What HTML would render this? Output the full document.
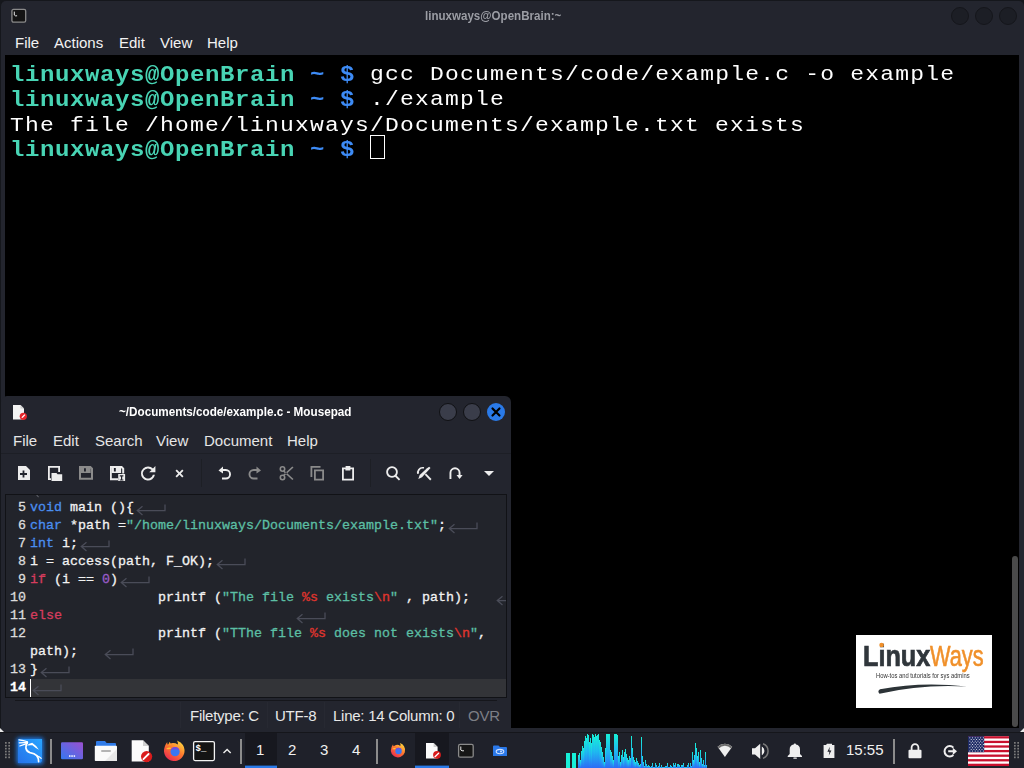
<!DOCTYPE html>
<html><head><meta charset="utf-8">
<style>
*{box-sizing:border-box;margin:0;padding:0}
html,body{width:1024px;height:768px;overflow:hidden;background:#15171c;font-family:"Liberation Sans",sans-serif}
.abs{position:absolute}
#term{left:1px;top:1px;width:1023px;height:731px;background:#23252e;border-radius:5px 5px 0 0}
#termtitle{left:425px;top:8px;transform:scaleX(0.89);transform-origin:0 0;font:bold 13px "Liberation Sans",sans-serif;color:#9b9da4}
.tbtn{width:18px;height:18px;border-radius:50%;background:#1c1e25;border:1px solid #15161b;top:7px}
.menu{font-size:15px;color:#f2f2f2;top:34px}
#tblack{left:5px;top:55px;width:1014px;height:673px;background:#000}
#ttext{left:10px;top:63px;font:bold 24px "Liberation Mono",monospace;letter-spacing:0.6px;line-height:27.78px;transform:scaleY(0.9);transform-origin:0 0;white-space:pre;color:#fff}
.g{color:#48d4b4;font-weight:bold}.b{color:#3d8bf5;font-weight:bold}.tl{height:27.78px}.n{line-height:0;font-weight:normal;font-size:23px;letter-spacing:1.2px;position:relative;top:-1px}
#cursor{left:370px;top:135px;width:15px;height:24px;border:1px solid #fff}
#sb{left:1012px;top:556px;width:6px;height:171px;background:#4a4a4a;border-radius:3px}
#mp{left:1px;top:396px;width:510px;height:336px;background:#23252e;border-radius:6px 6px 0 0}
#mptitle{left:119px;top:404px;font:bold 13px "Liberation Sans",sans-serif;color:#fff;transform:scaleX(0.9);transform-origin:0 0}
.mpm{font-size:15px;color:#e6e6e6;top:432px}
#editor{left:5px;top:494px;width:502px;height:204px;background:#22242b;border:1px solid #111216}
#code{left:0;top:497px;font:13.33px "Liberation Mono",monospace;line-height:18px;white-space:pre;color:#f0f0f0}
#taskbar{left:0;top:732px;width:1024px;height:36px;background:#1f212a;border-top:1px solid #121318}
.tb{color:#f0f0f0;font-size:15px;top:741px}
.k{color:#4a8ef0}.c{color:#d63c5e}.s{color:#5cbfa4}.e{color:#e0352e}.p{color:#9a5cc8}
i.r{display:inline-block;width:28px;height:10px;vertical-align:middle}
.sb{font-size:15px;color:#e8e8e8;top:707px;letter-spacing:-0.25px}
</style></head><body>
<div id="term" class="abs"></div>
<svg class="abs" style="left:10px;top:8px" width="18" height="16" viewBox="0 0 18 16"><rect x="1.9" y="1.4" width="13.8" height="12.8" rx="1.6" fill="#141414" stroke="#8a8a8a" stroke-width="1.3"/><path d="M4.3 3.6v3.4l1 0.8h1.8" stroke="#fff" stroke-width="0.9" fill="none"/></svg>
<div id="termtitle" class="abs">linuxways@OpenBrain:~</div>
<div class="abs tbtn" style="left:951px"></div>
<div class="abs tbtn" style="left:975px"></div>
<div class="abs tbtn" style="left:999px"></div>
<div class="abs menu" style="left:15px">File</div>
<div class="abs menu" style="left:54px">Actions</div>
<div class="abs menu" style="left:119px">Edit</div>
<div class="abs menu" style="left:160px">View</div>
<div class="abs menu" style="left:207px">Help</div>
<div id="tblack" class="abs"></div>
<div id="ttext" class="abs"><div class="tl"><span class="g">linuxways@OpenBrain</span> <span class="b">~ $</span> <span class="n">gcc Documents/code/example.c -o example</span></div><div class="tl"><span class="g">linuxways@OpenBrain</span> <span class="b">~ $</span> <span class="n">./example</span></div><div class="tl"><span class="n">The file /home/linuxways/Documents/example.txt exists</span></div><div class="tl"><span class="g">linuxways@OpenBrain</span> <span class="b">~ $</span> </div></div>
<div id="cursor" class="abs"></div>
<div id="sb" class="abs"></div>
<div class="abs" style="left:856px;top:635px;width:136px;height:73px;background:#fff"></div>
<div id="lw1" class="abs" style="left:863px;top:639px;font:bold 29px 'Liberation Sans',sans-serif;color:#30363b;-webkit-text-stroke:0.7px #30363b;transform:scaleX(0.87);transform-origin:0 0;line-height:34px">Linux</div>
<div id="lw2" class="abs" style="left:930px;top:639px;font:29px 'Liberation Sans',sans-serif;color:#f0902a;-webkit-text-stroke:0.6px #f0902a;transform:scaleX(0.75);transform-origin:0 0;line-height:34px">Ways</div>
<div id="lw3" class="abs" style="left:876px;top:671px;font:7px 'Liberation Sans',sans-serif;color:#333;transform:scaleX(0.83);transform-origin:0 0;line-height:9px;white-space:nowrap">How-tos and tutorials for sys admins</div>
<svg class="abs" style="left:856px;top:635px" width="136" height="73" viewBox="856 635 136 73"><circle cx="881.6" cy="645" r="2.3" fill="#f0902a"/><path d="M879.5 693.8Q922 684 967 686.6Q922 681.2 880 689.2Q877 691 879.5 693.8z" fill="#2c3337"/></svg>


<div id="mp" class="abs"></div>
<div id="mptitle" class="abs">~/Documents/code/example.c - Mousepad</div>
<div class="abs mpm" style="left:13px">File</div>
<div class="abs mpm" style="left:53px">Edit</div>
<div class="abs mpm" style="left:95px">Search</div>
<div class="abs mpm" style="left:156px">View</div>
<div class="abs mpm" style="left:204px">Document</div>
<div class="abs mpm" style="left:287px">Help</div>
<div class="abs" style="left:1px;top:453px;width:510px;height:1px;background:#1d1f26"></div>
<svg class="abs" style="left:0;top:456px" width="512" height="36" viewBox="0 456 512 36">
<g fill="#ededed">
<!-- new -->
<path d="M18 466h8l4 4v10h-12z"/>
<path d="M22.6 470.5h1.8v2.6h2.6v1.8h-2.6v2.6h-1.8v-2.6h-2.6v-1.8h2.6z" fill="#23252e"/>
<!-- open -->
<path d="M48 466h12v6h-1.8v-4.2h-8.4v10.4h1.2v1.8h-3z"/>
<path d="M51.5 473h5l1 1.2h4.7v6.8h-10.7z"/>
<!-- save as -->
<path fill-rule="evenodd" d="M110 466h12l2.2 2.2v5.2h-2v-4.3l-1.1-1.1v5.1h-9.2v-5.1h-0.1v10.2h6.2v2h-8z M113.9 468h1.9v3.6h-1.9z"/>
<path d="M118.2 474h6.9v7h-6.9z"/>
<path d="M119.8 475.3h3.6v1.2h-1.2v2.9h1.2v1.2h-3.6v-1.2h1.2v-2.9h-1.2z" fill="#23252e"/>
<!-- reload -->
<path d="M148 466.6a7 7 0 1 0 6.9 8.2h-2a5.1 5.1 0 1 1 -1.3-4.9l-2.4 2.4h6.2v-6.2l-2.4 2.4a7 7 0 0 0 -5-1.9z"/>
<!-- close x -->
<path d="M175.5 469.3l1.3-1.3l2.7 2.7l2.7-2.7l1.3 1.3l-2.7 2.7l2.7 2.7l-1.3 1.3l-2.7-2.7l-2.7 2.7l-1.3-1.3l2.7-2.7z" transform="translate(0,1.5)"/>
<!-- undo -->
<path d="M218.5 470.5l4.5-4v2.6h2.8a5.2 5.2 0 0 1 0 10.4h-3.8v-1.9h3.8a3.3 3.3 0 0 0 0-6.6h-2.8v2.6z"/>
<!-- paste -->
<path d="M345.6 466h4.8v1.5h3.6v13h-12v-13h3.6z M343.8 469.3v9.4h8.4v-9.4h-1.8v1.3h-5v-1.3z"/>
<!-- search -->
<path d="M392 466.2a5.8 5.8 0 1 1 -0.01 0z M392 468a4 4 0 1 0 0.01 0z"/>
<path d="M395.6 474.6l4.6 4.6l-1.3 1.3l-4.6-4.6z"/>
<!-- replace -->
<path d="M422.5 467a5.5 5.5 0 0 0 -5.3 7l1.8-0.6a3.7 3.7 0 0 1 4.6-4.6l0.6-1.7a5.5 5.5 0 0 0 -1.7-0.1z"/>
<path d="M427 468.3l2.2-1.6l1.3 1.3l-8.5 9.3l-3.7 1.6l1.4-3.8z"/>
<path d="M424.8 474.8l1.3-1.3l5.4 5.6l-1.3 1.3z"/>
<!-- goto -->
<path d="M449.5 479v-6.2a5.5 5.5 0 0 1 11 0v2.2h2.1l-3.05 4l-3.05-4h2.1v-2.2a3.6 3.6 0 0 0 -7.2 0v6.2z"/>
<!-- dropdown -->
<path d="M484 471h10l-5 5z"/>
</g>
<g fill="#8b8b8b">
<!-- save gray -->
<path fill-rule="evenodd" d="M79 466h11.8l2.2 2.2v11.6h-14z M81 468v9.8h10v-8.9l-0.3-0.3v4.3h-9.7v-4.9z M84 468.2h1.9v3.4h-1.9z"/>
<!-- redo -->
<path d="M261 470.5l-4.5-4v2.6h-2.8a5.2 5.2 0 0 0 0 10.4h3.8v-1.9h-3.8a3.3 3.3 0 0 1 0-6.6h2.8v2.6z"/>
<!-- scissors -->
<circle cx="282.5" cy="469" r="2.2" fill="none" stroke="#8b8b8b" stroke-width="1.6"/>
<circle cx="282.5" cy="477.5" r="2.2" fill="none" stroke="#8b8b8b" stroke-width="1.6"/>
<path d="M284.2 470.4l9.3 8.5l-1.2 1.2l-9.3-8.5z M284.2 476.1l9.3-8.5l-1.2-1.2l-9.3 8.5z"/>
<!-- copy -->
<path d="M310.5 466h10v1.8h-8.2v9.2h-1.8z M314 469.5h10v11h-10z M315.8 471.3v7.4h6.4v-7.4z"/>
</g>
<rect x="201" y="459" width="1" height="28" fill="#1d1f25"/>
<rect x="370" y="459" width="1" height="28" fill="#1d1f25"/>
</svg>
<!-- mousepad title icon -->
<svg class="abs" style="left:12px;top:404px" width="16" height="17" viewBox="0 0 16 17">
<path d="M1 1h7.5l3.5 3.5v11h-11z" fill="#f4f4f4"/>
<path d="M8.5 1v3.5h3.5z" fill="#cfcfcf"/>
<circle cx="11.3" cy="12.3" r="3.6" fill="#e5262b"/>
<path d="M9.6 14l0.3-1.2l2.6-2.6l0.9 0.9l-2.6 2.6z" fill="#fff"/>
</svg>
<div class="abs" style="left:439px;top:403px;width:18px;height:18px;border-radius:50%;background:#3a3d4a;border:1px solid #101114"></div>
<div class="abs" style="left:463px;top:403px;width:18px;height:18px;border-radius:50%;background:#3a3d4a;border:1px solid #101114"></div>
<div class="abs" style="left:487px;top:403px;width:18px;height:18px;border-radius:50%;background:#2a7ae8"></div>
<svg class="abs" style="left:487px;top:403px" width="18" height="18" viewBox="0 0 18 18"><path d="M5.5 5.5l7 7M12.5 5.5l-7 7" stroke="#000" stroke-width="2.2" stroke-linecap="round"/></svg>
<!-- status bar -->
<div class="abs" style="left:15px;top:700px;width:482px;height:1px;background:#15161b"></div>
<div class="abs" style="left:180px;top:702px;width:1px;height:26px;background:#272932"></div>
<div class="abs" style="left:267px;top:702px;width:1px;height:26px;background:#272932"></div>
<div class="abs" style="left:324px;top:702px;width:1px;height:26px;background:#272932"></div>
<div class="abs" style="left:459px;top:702px;width:1px;height:26px;background:#272932"></div>
<div class="abs sb" style="left:190px">Filetype: C</div>
<div class="abs sb" style="left:275px">UTF-8</div>
<div class="abs sb" style="left:333px">Line: 14 Column: 0</div>
<div class="abs sb" style="left:468px;color:#7d7f86">OVR</div>
<div id="editor" class="abs"></div>
<div id="gutter" class="abs" style="left:6px;top:499px;width:20px;font:13.33px 'Liberation Mono',monospace;line-height:18px;text-align:right;color:#dcdcdc;-webkit-text-stroke:0.3px currentColor;white-space:pre">5
6
7
8
9
10
11
12

13
<b style="color:#fff">14</b></div>
<div id="hl" class="abs" style="left:30px;top:679px;width:476px;height:18px;background:#333438"></div>
<div id="caret" class="abs" style="left:30px;top:679px;width:1px;height:18px;background:#fff"></div>
<div id="code" class="abs" style="left:30px;top:499px;font:13.33px 'Liberation Mono',monospace;line-height:18px;white-space:pre;color:#f2f2f2;-webkit-text-stroke:0.3px currentColor"><span class="k">void</span> main (){
<span class="k">char</span> *path =<span class="s">"/home/linuxways/Documents/example.txt"</span>;
<span class="k">int</span> i;
i = access(path, F_OK);
<span class="c">if</span> (i == <span class="p">0</span>)
                printf (<span class="s">"The file <span class="e">%s</span> exists<span class="e">\n</span>"</span> , path);
<span class="c">else</span>
                printf (<span class="s">"TThe file <span class="e">%s</span> does not exists<span class="e">\n</span>"</span>,
path);
}
</div>

<svg class="abs" style="left:0;top:0;pointer-events:none" width="507" height="768" viewBox="0 0 507 768"><defs><clipPath id="edclip"><rect x="6" y="495" width="500" height="202"/></clipPath></defs><g clip-path="url(#edclip)" fill="none" stroke="#4a4c58" stroke-width="1.3"><path d="M36.5 495.2L38.6 496.8" stroke="#7a7c84" stroke-width="1"/><path d="M142.5 506.20000000000005L137.3 510.6L142.5 515.0M137.5 510.6H165V504.6"/><path d="M454.5 524.2L449.3 528.6L454.5 533.0M449.5 528.6H477V522.6"/><path d="M86.5 542.2L81.3 546.6L86.5 551.0M81.5 546.6H109V540.6"/><path d="M222.5 560.2L217.3 564.6L222.5 569.0M217.5 564.6H245V558.6"/><path d="M126.5 578.2L121.3 582.6L126.5 587.0M121.5 582.6H149V576.6"/><path d="M502.5 596.2L497.3 600.6L502.5 605.0M497.5 600.6H525V594.6"/><path d="M302.5 614.2L297.3 618.6L302.5 623.0M297.5 618.6H325V612.6"/><path d="M110.5 650.2L105.3 654.6L110.5 659.0M105.5 654.6H133V648.6"/><path d="M46.5 668.2L41.3 672.6L46.5 677.0M41.5 672.6H69V666.6"/><path d="M38.5 686.2L33.3 690.6L38.5 695.0M33.5 690.6H61V684.6"/></g></svg>
<div id="taskbar" class="abs"></div>
<svg class="abs" style="left:0;top:726px" width="8" height="8" viewBox="0 0 8 8"><path d="M0 2L5 7H0z" fill="#e8e8e8"/></svg>
<svg class="abs" style="left:1018px;top:726px" width="6" height="8" viewBox="0 0 6 8"><path d="M6 2V7H1z" fill="#e8e8e8"/></svg>

<svg class="abs" style="left:0;top:732px" width="1024" height="36" viewBox="0 732 1024 36">
<defs>
<linearGradient id="kali" x1="0" y1="1" x2="1" y2="0"><stop offset="0" stop-color="#2672ea"/><stop offset="1" stop-color="#28a4ff"/></linearGradient>
<linearGradient id="purp" x1="0" y1="1" x2="1" y2="0"><stop offset="0" stop-color="#3478f0"/><stop offset="1" stop-color="#9c4fd0"/></linearGradient>
<linearGradient id="viz" x1="0" y1="0" x2="0" y2="1"><stop offset="0" stop-color="#17f0d8"/><stop offset="0.5" stop-color="#1fb8f0"/><stop offset="1" stop-color="#2d6cf6"/></linearGradient>
<radialGradient id="ff" cx="0.35" cy="0.3" r="0.8"><stop offset="0" stop-color="#ffd43a"/><stop offset="0.5" stop-color="#ff7a2a"/><stop offset="1" stop-color="#e8254a"/></radialGradient>
<linearGradient id="ff2" x1="0.85" y1="0.1" x2="0.25" y2="0.95"><stop offset="0" stop-color="#ffd23e"/><stop offset="0.45" stop-color="#ff7b2e"/><stop offset="1" stop-color="#ec2e4e"/></linearGradient>
<filter id="glow" x="-50%" y="-50%" width="200%" height="200%"><feGaussianBlur stdDeviation="2.2"/></filter>
</defs>
<rect x="0" y="732" width="1024" height="1" fill="#15161b"/>
<!-- grip -->
<g fill="#7c7c7c">
<rect x="5.0" y="742.0" width="1.7" height="1.7"/><rect x="1014.0" y="742.0" width="1.7" height="1.7"/><rect x="5.0" y="744.9" width="1.7" height="1.7"/><rect x="1014.0" y="744.9" width="1.7" height="1.7"/><rect x="5.0" y="747.8" width="1.7" height="1.7"/><rect x="1014.0" y="747.8" width="1.7" height="1.7"/><rect x="5.0" y="750.7" width="1.7" height="1.7"/><rect x="1014.0" y="750.7" width="1.7" height="1.7"/><rect x="5.0" y="753.6" width="1.7" height="1.7"/><rect x="1014.0" y="753.6" width="1.7" height="1.7"/><rect x="5.0" y="756.5" width="1.7" height="1.7"/><rect x="1014.0" y="756.5" width="1.7" height="1.7"/><rect x="8.3" y="742.0" width="1.7" height="1.7"/><rect x="1017.3" y="742.0" width="1.7" height="1.7"/><rect x="8.3" y="744.9" width="1.7" height="1.7"/><rect x="1017.3" y="744.9" width="1.7" height="1.7"/><rect x="8.3" y="747.8" width="1.7" height="1.7"/><rect x="1017.3" y="747.8" width="1.7" height="1.7"/><rect x="8.3" y="750.7" width="1.7" height="1.7"/><rect x="1017.3" y="750.7" width="1.7" height="1.7"/><rect x="8.3" y="753.6" width="1.7" height="1.7"/><rect x="1017.3" y="753.6" width="1.7" height="1.7"/><rect x="8.3" y="756.5" width="1.7" height="1.7"/><rect x="1017.3" y="756.5" width="1.7" height="1.7"/></g>
<!-- kali -->
<rect x="16.5" y="737.5" width="27" height="27" rx="3" fill="#1e86ff" opacity="0.85" filter="url(#glow)"/>
<path d="M18 739h24v20.5a3.5 3.5 0 0 1 -3.5 3.5h-20.5z" fill="url(#kali)"/>
<g fill="none" stroke="#fff" stroke-linecap="round" stroke-width="1.2">
<path d="M19 739.8Q23.5 740.2 27.5 741.8M19.2 742.8Q23.5 742.4 27.5 742.6M19.8 746Q23.8 744.4 27.5 743.4"/>
<path d="M27.4 742.4Q25.6 745.2 25.9 748Q26.6 751.8 30 752.6Q34.5 753.2 36.8 755.6Q38.6 757.8 38.6 761.6" stroke-width="1.7"/>
<path d="M36.5 755.6Q39.5 756.5 41.2 758.4" stroke-width="1.1"/>
</g>
<path d="M26.8 745.6Q29 743.2 32.2 742.8Q35.8 745 38.9 749.8Q35 747.6 32.4 745.2Q29.5 745 26.8 745.6z" fill="#fff"/>

<rect x="50" y="739" width="2" height="25" fill="#8c8c8c"/>
<!-- purple -->
<rect x="61" y="742.3" width="22" height="17" rx="1.2" fill="url(#purp)"/>
<rect x="69" y="755.3" width="1.5" height="1.5" fill="#fff"/><rect x="71.3" y="755.3" width="1.5" height="1.5" fill="#fff"/><rect x="73.6" y="755.3" width="1.5" height="1.5" fill="#fff"/>
<!-- folder -->
<path d="M96 742a1 1 0 0 1 1-1h8l1.6 2h8.4a1 1 0 0 1 1 1v2h-20z" fill="#2f7be8"/>
<rect x="94.8" y="745.7" width="22.2" height="15.3" rx="0.8" fill="#fafafa"/>
<path d="M117 749v12h-12z" fill="#e8e8e8"/>
<rect x="101" y="750" width="10" height="2" rx="1" fill="#b4b4b4"/>
<!-- doc -->
<path d="M131.7 740.2h11.3l5.8 5.8v15.6h-17.1z" fill="#fbfbfb"/>
<path d="M143 740.2v5.8h5.8z" fill="#cfcfcf"/>
<circle cx="146.6" cy="756.6" r="5.6" fill="#da1c1c"/>
<path d="M143.4 759.2l5.2-5.2" stroke="#fff" stroke-width="1.8" stroke-linecap="round"/>
<!-- firefox -->
<g transform="translate(174.3 751.3)">
<path d="M-10.3 0.5A10.3 10.3 0 1 0 8.6-6.2Q7-9.4 2.6-10.9Q4.2-8.6 3.3-6.8A7.4 7.4 0 0 0 -6.2-6.3Q-7.3-7.8 -7-9.3Q-10.5-5 -10.3 0.5z" fill="url(#ff2)"/>
<path d="M-6.6-5.8Q-5.5-8 -4.6-9.6Q-3.5-7.5 -3.2-6.4z" fill="#ff9a2a"/>
<path d="M-8.3-2.4Q-5.5-4.8 -2.7-3.2Q-4.5-1.2 -8.3-2.4z" fill="#ffc233"/>
<circle cx="0.8" cy="0.4" r="4.6" fill="#3a77f2"/>
<path d="M-3.6-1.3A4.6 4.6 0 0 1 5.1-1.2Q1-3 -3.6-1.3z" fill="#7a4ad8"/>
</g>
<!-- terminal -->
<rect x="193.6" y="741.6" width="20.8" height="19" rx="1.5" fill="#141414" stroke="#f4f4f4" stroke-width="1.3"/>
<text x="195.6" y="750.8" font-family="Liberation Mono" font-weight="bold" font-size="9" fill="#fff">$_</text>
<!-- chevron -->
<path d="M223.5 753l3.6-3.6l3.6 3.6" fill="none" stroke="#eee" stroke-width="1.4"/>
<rect x="240" y="739" width="2" height="25" fill="#8c8c8c"/>
<!-- workspace -->
<rect x="245" y="733" width="32" height="35" fill="#17181f"/>
<rect x="245" y="765.6" width="32" height="2.4" fill="#2a7ae8"/>
<rect x="376" y="739" width="2" height="25" fill="#8c8c8c"/>
<!-- small firefox -->
<g transform="translate(398 750.7) scale(0.7)">
<path d="M-10.3 0.5A10.3 10.3 0 1 0 8.6-6.2Q7-9.4 2.6-10.9Q4.2-8.6 3.3-6.8A7.4 7.4 0 0 0 -6.2-6.3Q-7.3-7.8 -7-9.3Q-10.5-5 -10.3 0.5z" fill="url(#ff2)"/>
<path d="M-8.3-2.4Q-5.5-4.8 -2.7-3.2Q-4.5-1.2 -8.3-2.4z" fill="#ffc233"/>
<circle cx="0.8" cy="0.4" r="4.6" fill="#3a77f2"/>
<path d="M-3.6-1.3A4.6 4.6 0 0 1 5.1-1.2Q1-3 -3.6-1.3z" fill="#7a4ad8"/>
</g>
<!-- active mousepad -->
<rect x="415" y="733" width="34" height="35" fill="#17181f"/>
<rect x="415" y="765.6" width="34" height="2.4" fill="#2a7ae8"/>
<path d="M426 743h7.6l4 4v11.5h-11.6z" fill="#fbfbfb"/>
<path d="M433.6 743v4h4z" fill="#cfcfcf"/>
<circle cx="437" cy="754.8" r="3.9" fill="#da1c1c"/>
<path d="M435 756.8l3.6-3.6" stroke="#fff" stroke-width="1.3" stroke-linecap="round"/>
<!-- small terminal -->
<rect x="458.6" y="744.4" width="14.6" height="12.8" rx="1.5" fill="#161616" stroke="#8a8a8a" stroke-width="1.3"/>
<path d="M460.8 746.5v3.5l1.2 0.8h2" stroke="#fff" stroke-width="0.9" fill="none"/>
<!-- blue folder -->
<path d="M493 746.6a1 1 0 0 1 1-1h4.5l1.5 1.3h6a1 1 0 0 1 1 1v8.1h-14z" fill="#2a78e8"/>
<ellipse cx="500" cy="751.6" rx="3.8" ry="2.2" fill="none" stroke="#cfe0ff" stroke-width="1.1"/>
<circle cx="501" cy="751.6" r="1" fill="#cfe0ff"/>
<!-- visualizer -->
<g fill="url(#viz)">
<rect x="566" y="753" width="4" height="15" fill="#17f0d8"/><rect x="572" y="753" width="4" height="15" fill="#17f0d8"/>
<rect x="578" y="755" width="1" height="13"/><rect x="579" y="753" width="1" height="15"/><rect x="580" y="760" width="1" height="8"/><rect x="581" y="751" width="1" height="17"/><rect x="582" y="746" width="1" height="22"/><rect x="583" y="748" width="1" height="20"/><rect x="584" y="741" width="1" height="27"/><rect x="585" y="736" width="1" height="32"/><rect x="586" y="738" width="1" height="30"/><rect x="587" y="734" width="1" height="34"/><rect x="588" y="735" width="1" height="33"/><rect x="589" y="742" width="1" height="26"/><rect x="590" y="738" width="1" height="30"/><rect x="591" y="743" width="1" height="25"/><rect x="592" y="734" width="1" height="34"/><rect x="593" y="735" width="1" height="33"/><rect x="594" y="737" width="1" height="31"/><rect x="595" y="734" width="1" height="34"/><rect x="596" y="736" width="1" height="32"/><rect x="597" y="735" width="1" height="33"/><rect x="598" y="734" width="1" height="34"/><rect x="599" y="740" width="1" height="28"/><rect x="600" y="742" width="1" height="26"/><rect x="601" y="747" width="1" height="21"/><rect x="602" y="752" width="1" height="16"/><rect x="603" y="757" width="1" height="11"/><rect x="604" y="762" width="1" height="6"/><rect x="605" y="748" width="1" height="20"/><rect x="606" y="734" width="1" height="34"/><rect x="607" y="734" width="1" height="34"/><rect x="608" y="734" width="1" height="34"/><rect x="609" y="734" width="1" height="34"/><rect x="610" y="750" width="1" height="18"/><rect x="611" y="752" width="1" height="16"/><rect x="612" y="756" width="1" height="12"/><rect x="613" y="760" width="1" height="8"/><rect x="614" y="734" width="1" height="34"/><rect x="615" y="734" width="1" height="34"/><rect x="616" y="734" width="1" height="34"/><rect x="617" y="735" width="1" height="33"/><rect x="618" y="756" width="1" height="12"/><rect x="619" y="752" width="1" height="16"/><rect x="620" y="762" width="1" height="6"/><rect x="621" y="755" width="1" height="13"/><rect x="622" y="750" width="1" height="18"/><rect x="623" y="757" width="1" height="11"/><rect x="624" y="752" width="1" height="16"/><rect x="625" y="749" width="1" height="19"/><rect x="626" y="754" width="1" height="14"/><rect x="627" y="758" width="1" height="10"/><rect x="628" y="760" width="1" height="8"/><rect x="629" y="756" width="1" height="12"/><rect x="630" y="758" width="1" height="10"/><rect x="631" y="736" width="1" height="32"/><rect x="632" y="748" width="1" height="20"/><rect x="633" y="757" width="1" height="11"/><rect x="634" y="760" width="1" height="8"/><rect x="635" y="762" width="1" height="6"/><rect x="636" y="758" width="1" height="10"/><rect x="637" y="761" width="1" height="7"/><rect x="638" y="763" width="1" height="5"/><rect x="639" y="765" width="1" height="3"/><rect x="640" y="764" width="1" height="4"/><rect x="641" y="737" width="1" height="31"/><rect x="642" y="756" width="1" height="12"/><rect x="643" y="762" width="1" height="6"/><rect x="644" y="766" width="1" height="2"/><rect x="645" y="760" width="1" height="8"/><rect x="646" y="764" width="1" height="4"/><rect x="647" y="766" width="1" height="2"/><rect x="648" y="765" width="1" height="3"/><rect x="649" y="766" width="1" height="2"/><rect x="650" y="767" width="1" height="1"/><rect x="651" y="766" width="1" height="2"/><rect x="652" y="763" width="1" height="5"/><rect x="653" y="767" width="1" height="1"/><rect x="654" y="767" width="1" height="1"/><rect x="655" y="763" width="1" height="5"/><rect x="656" y="765" width="1" height="3"/><rect x="657" y="767" width="1" height="1"/><rect x="658" y="766" width="1" height="2"/><rect x="659" y="763" width="1" height="5"/><rect x="660" y="767" width="1" height="1"/><rect x="661" y="765" width="1" height="3"/><rect x="662" y="767" width="1" height="1"/><rect x="663" y="767" width="1" height="1"/><rect x="664" y="767" width="1" height="1"/><rect x="665" y="766" width="1" height="2"/><rect x="666" y="766" width="1" height="2"/><rect x="667" y="763" width="1" height="5"/><rect x="668" y="767" width="1" height="1"/><rect x="669" y="767" width="1" height="1"/><rect x="670" y="765" width="1" height="3"/><rect x="671" y="766" width="1" height="2"/><rect x="672" y="767" width="1" height="1"/><rect x="673" y="763" width="1" height="5"/><rect x="674" y="765" width="1" height="3"/><rect x="675" y="763" width="1" height="5"/><rect x="676" y="767" width="1" height="1"/><rect x="677" y="764" width="1" height="4"/><rect x="678" y="764" width="1" height="4"/><rect x="679" y="765" width="1" height="3"/><rect x="680" y="767" width="1" height="1"/><rect x="681" y="765" width="1" height="3"/><rect x="682" y="765" width="1" height="3"/><rect x="683" y="763" width="1" height="5"/><rect x="684" y="767" width="1" height="1"/><rect x="685" y="767" width="1" height="1"/><rect x="686" y="767" width="1" height="1"/><rect x="687" y="765" width="1" height="3"/><rect x="688" y="763" width="1" height="5"/><rect x="689" y="767" width="1" height="1"/><rect x="690" y="763" width="1" height="5"/><rect x="691" y="766" width="1" height="2"/><rect x="692" y="752" width="1" height="16"/><rect x="693" y="760" width="1" height="8"/><rect x="694" y="755" width="1" height="13"/><rect x="695" y="743" width="1" height="25"/><rect x="696" y="748" width="1" height="20"/><rect x="697" y="756" width="1" height="12"/><rect x="698" y="752" width="1" height="16"/><rect x="699" y="762" width="1" height="6"/><rect x="700" y="750" width="1" height="18"/><rect x="701" y="758" width="1" height="10"/><rect x="702" y="764" width="1" height="4"/><rect x="703" y="760" width="1" height="8"/><rect x="704" y="765" width="1" height="3"/><rect x="705" y="752" width="1" height="16"/><rect x="706" y="765" width="1" height="3"/></g>
<!-- wifi -->
<path d="M717.6 746.8a10.5 10.5 0 0 1 14.6 0l-7.3 10.2z" fill="#efefef"/>
<path d="M717.6 746.8a10.5 10.5 0 0 1 14.6 0l-1.2 1.7a8.4 8.4 0 0 0 -12.2 0z" fill="#6c6c6c"/>
<!-- volume -->
<path d="M752 748.2h3l5.2-4.5v15.3l-5.2-4.5h-3z" fill="#efefef"/>
<path d="M761.8 746.6a4.8 4.8 0 0 1 0 8.6z" fill="#efefef"/>
<path d="M763 743.8a7.8 7.8 0 0 1 0 14.6" fill="none" stroke="#7a7a7a" stroke-width="1.5"/>
<!-- bell -->
<path d="M795 743.5a1 1 0 0 1 1 1a5 5 0 0 1 4 5v4.5l2 2v1h-14.3v-1l2-2v-4.5a5 5 0 0 1 4-5a1 1 0 0 1 1-1z" fill="#efefef"/>
<rect x="793.3" y="757.6" width="3.6" height="1.2" rx="0.6" fill="#efefef"/>
<!-- battery -->
<path d="M827 743.7h5v1.3h2.4v13.1h-10.8v-13.1h2.4z" fill="#efefef"/>
<path d="M829.8 746.8l-2.4 5h2l-0.6 3.8l2.6-5.2h-2z" fill="#1f212a"/>
<rect x="893" y="739" width="2" height="25" fill="#8c8c8c"/>
<!-- lock -->
<path d="M911.6 750v-2.4a3.4 3.4 0 0 1 6.8 0v2.4" fill="none" stroke="#efefef" stroke-width="1.8"/>
<rect x="908.5" y="749.8" width="13" height="8.4" rx="1" fill="#efefef"/>
<!-- logout -->
<path d="M953.4 747.6A5.2 5.2 0 1 0 953.4 755" fill="none" stroke="#efefef" stroke-width="2"/>
<path d="M948.2 750.3h4.6v-2.6l4.2 3.6l-4.2 3.6v-2.6h-4.6z" fill="#efefef"/>
<!-- flag -->
<g>
<rect x="968" y="736.2" width="41" height="29.8" fill="#fff"/>
<rect x="968" y="736.20" width="41" height="2.29" fill="#c8102e"/><rect x="968" y="740.78" width="41" height="2.29" fill="#c8102e"/><rect x="968" y="745.37" width="41" height="2.29" fill="#c8102e"/><rect x="968" y="749.95" width="41" height="2.29" fill="#c8102e"/><rect x="968" y="754.54" width="41" height="2.29" fill="#c8102e"/><rect x="968" y="759.12" width="41" height="2.29" fill="#c8102e"/><rect x="968" y="763.71" width="41" height="2.29" fill="#c8102e"/><rect x="968" y="736.2" width="16.2" height="16" fill="#1e2b66"/><rect x="969.40" y="737.40" width="0.9" height="0.9" fill="#fff"/><rect x="972.10" y="737.40" width="0.9" height="0.9" fill="#fff"/><rect x="974.80" y="737.40" width="0.9" height="0.9" fill="#fff"/><rect x="977.50" y="737.40" width="0.9" height="0.9" fill="#fff"/><rect x="980.20" y="737.40" width="0.9" height="0.9" fill="#fff"/><rect x="982.90" y="737.40" width="0.9" height="0.9" fill="#fff"/><rect x="970.75" y="739.05" width="0.9" height="0.9" fill="#fff"/><rect x="973.45" y="739.05" width="0.9" height="0.9" fill="#fff"/><rect x="976.15" y="739.05" width="0.9" height="0.9" fill="#fff"/><rect x="978.85" y="739.05" width="0.9" height="0.9" fill="#fff"/><rect x="981.55" y="739.05" width="0.9" height="0.9" fill="#fff"/><rect x="969.40" y="740.70" width="0.9" height="0.9" fill="#fff"/><rect x="972.10" y="740.70" width="0.9" height="0.9" fill="#fff"/><rect x="974.80" y="740.70" width="0.9" height="0.9" fill="#fff"/><rect x="977.50" y="740.70" width="0.9" height="0.9" fill="#fff"/><rect x="980.20" y="740.70" width="0.9" height="0.9" fill="#fff"/><rect x="982.90" y="740.70" width="0.9" height="0.9" fill="#fff"/><rect x="970.75" y="742.35" width="0.9" height="0.9" fill="#fff"/><rect x="973.45" y="742.35" width="0.9" height="0.9" fill="#fff"/><rect x="976.15" y="742.35" width="0.9" height="0.9" fill="#fff"/><rect x="978.85" y="742.35" width="0.9" height="0.9" fill="#fff"/><rect x="981.55" y="742.35" width="0.9" height="0.9" fill="#fff"/><rect x="969.40" y="744.00" width="0.9" height="0.9" fill="#fff"/><rect x="972.10" y="744.00" width="0.9" height="0.9" fill="#fff"/><rect x="974.80" y="744.00" width="0.9" height="0.9" fill="#fff"/><rect x="977.50" y="744.00" width="0.9" height="0.9" fill="#fff"/><rect x="980.20" y="744.00" width="0.9" height="0.9" fill="#fff"/><rect x="982.90" y="744.00" width="0.9" height="0.9" fill="#fff"/><rect x="970.75" y="745.65" width="0.9" height="0.9" fill="#fff"/><rect x="973.45" y="745.65" width="0.9" height="0.9" fill="#fff"/><rect x="976.15" y="745.65" width="0.9" height="0.9" fill="#fff"/><rect x="978.85" y="745.65" width="0.9" height="0.9" fill="#fff"/><rect x="981.55" y="745.65" width="0.9" height="0.9" fill="#fff"/><rect x="969.40" y="747.30" width="0.9" height="0.9" fill="#fff"/><rect x="972.10" y="747.30" width="0.9" height="0.9" fill="#fff"/><rect x="974.80" y="747.30" width="0.9" height="0.9" fill="#fff"/><rect x="977.50" y="747.30" width="0.9" height="0.9" fill="#fff"/><rect x="980.20" y="747.30" width="0.9" height="0.9" fill="#fff"/><rect x="982.90" y="747.30" width="0.9" height="0.9" fill="#fff"/><rect x="970.75" y="748.95" width="0.9" height="0.9" fill="#fff"/><rect x="973.45" y="748.95" width="0.9" height="0.9" fill="#fff"/><rect x="976.15" y="748.95" width="0.9" height="0.9" fill="#fff"/><rect x="978.85" y="748.95" width="0.9" height="0.9" fill="#fff"/><rect x="981.55" y="748.95" width="0.9" height="0.9" fill="#fff"/><rect x="969.40" y="750.60" width="0.9" height="0.9" fill="#fff"/><rect x="972.10" y="750.60" width="0.9" height="0.9" fill="#fff"/><rect x="974.80" y="750.60" width="0.9" height="0.9" fill="#fff"/><rect x="977.50" y="750.60" width="0.9" height="0.9" fill="#fff"/><rect x="980.20" y="750.60" width="0.9" height="0.9" fill="#fff"/><rect x="982.90" y="750.60" width="0.9" height="0.9" fill="#fff"/></g>
</svg>
<div class="abs tb" style="left:256px">1</div>
<div class="abs tb" style="left:288px">2</div>
<div class="abs tb" style="left:320px">3</div>
<div class="abs tb" style="left:352px">4</div>
<div class="abs tb" style="left:846px;color:#f0f0f0">15:55</div>

</body></html>
